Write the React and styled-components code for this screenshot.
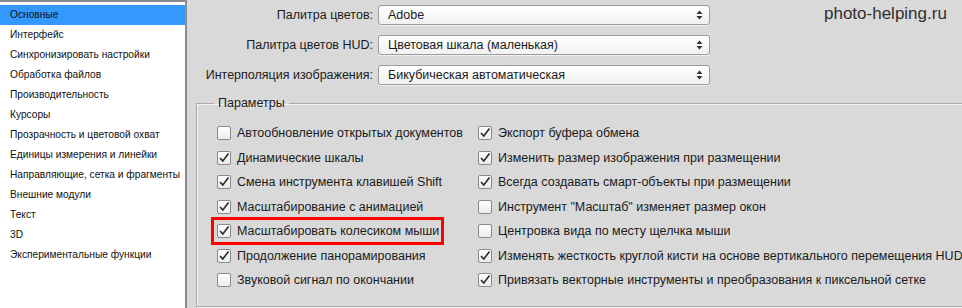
import React from 'react';
import styled, { createGlobalStyle } from 'styled-components';

const Global = createGlobalStyle`
html, body {
  margin: 0;
  padding: 0;
  background: #d9d9d9;
  overflow: hidden;
}
body {
  font-family: "Liberation Sans", Arial, sans-serif;
  color: #1b1b1b;
}
`;

const Page = styled.div`
display: flex;
width: 962px;
height: 308px;
background: #d9d9d9;
`;

const Sidebar = styled.ul`
list-style: none;
margin: 0;
padding: 3px 0 0;
flex: none;
width: 187px;
box-sizing: border-box;
background: #fff;
border-top: 2px solid #8c8c8c;
border-right: 2px solid #8c8c8c;
`;

const NavItem = styled.li`
height: 20px;
line-height: 20px;
padding-left: 10px;
font-size: 10.2px;
color: #111;
background: ${p => (p.$active ? '#3399ff' : 'transparent')};
white-space: nowrap;
`;

const Main = styled.div`
flex: 1;
display: flex;
flex-direction: column;
padding-left: 9px;
min-width: 0;
`;

const Header = styled.div`
display: flex;
align-items: flex-start;
`;

const FormGrid = styled.div`
display: grid;
grid-template-columns: 177px 332px;
grid-auto-rows: 20px;
column-gap: 5px;
row-gap: 10px;
padding-top: 5px;
`;

const Label = styled.label`
text-align: right;
font-size: 12.5px;
line-height: 20px;
white-space: nowrap;
`;

const Select = styled.div`
display: flex;
align-items: center;
justify-content: space-between;
box-sizing: border-box;
height: 20px;
padding: 0 6px 0 9px;
font-size: 12.5px;
border: 1px solid #9c9c9c;
border-radius: 3px;
background: linear-gradient(#ffffff, #f1f1f1);
box-shadow: 0 1px 0 rgba(255, 255, 255, 0.6);
white-space: nowrap;
`;

const Watermark = styled.div`
margin-left: 114px;
margin-top: 4px;
font-size: 17px;
line-height: 20px;
color: #2f2f2f;
white-space: nowrap;
`;

const Group = styled.fieldset`
margin: 10px -40px 0 0;
padding: 10px 0 13px 20px;
border: 1px solid #a9a9a9;
box-shadow: inset 1px 1px 0 #f3f3f3, 1px 1px 0 #f3f3f3;
`;

const Legend = styled.legend`
margin-left: -3px;
padding: 0 4px;
font-size: 12.5px;
line-height: 16px;
`;

const Columns = styled.div`
display: grid;
grid-template-columns: 261px 1fr;
`;

const Column = styled.div`
display: flex;
flex-direction: column;
align-items: flex-start;
`;

const Row = styled.div`
position: relative;
display: inline-flex;
align-items: center;
height: 24.5px;
font-size: 12.5px;
white-space: nowrap;
`;

const Box = styled.span`
display: inline-flex;
align-items: center;
justify-content: center;
box-sizing: border-box;
width: 14px;
height: 14px;
margin-right: 6px;
border: 1px solid #8a8a8a;
border-radius: 2px;
background: linear-gradient(#fdfdfd, #ececec);
`;

const Highlight = styled.span`
position: absolute;
left: -6px;
right: -5px;
top: -2px;
bottom: -1px;
border: 3px solid #f00;
pointer-events: none;
`;

function Check({ on }) {
  return (
    <Box>
      {on && (
        <svg width="12" height="12" viewBox="0 0 12 12">
          <polyline points="2,6 4.8,9 10.5,1.5" fill="none" stroke="#2a2a2a" strokeWidth="1.6" />
        </svg>
      )}
    </Box>
  );
}

function Arrows() {
  return (
    <svg width="7" height="10" viewBox="0 0 7 10">
      <polygon points="0.5,4 6.5,4 3.5,0.5" fill="#333" />
      <polygon points="0.5,6 6.5,6 3.5,9.5" fill="#333" />
    </svg>
  );
}

const nav = [
  'Основные',
  'Интерфейс',
  'Синхронизировать настройки',
  'Обработка файлов',
  'Производительность',
  'Курсоры',
  'Прозрачность и цветовой охват',
  'Единицы измерения и линейки',
  'Направляющие, сетка и фрагменты',
  'Внешние модули',
  'Текст',
  '3D',
  'Экспериментальные функции',
];

const selects = [
  ['Палитра цветов:', 'Adobe'],
  ['Палитра цветов HUD:', 'Цветовая шкала (маленькая)'],
  ['Интерполяция изображения:', 'Бикубическая автоматическая'],
];

const left = [
  ['Автообновление открытых документов', false],
  ['Динамические шкалы', true],
  ['Смена инструмента клавишей Shift', true],
  ['Масштабирование с анимацией', true],
  ['Масштабировать колесиком мыши', true, true],
  ['Продолжение панорамирования', true],
  ['Звуковой сигнал по окончании', false],
];

const right = [
  ['Экспорт буфера обмена', true],
  ['Изменить размер изображения при размещении', true],
  ['Всегда создавать смарт-объекты при размещении', true],
  ['Инструмент "Масштаб" изменяет размер окон', false],
  ['Центровка вида по месту щелчка мыши', false],
  ['Изменять жесткость круглой кисти на основе вертикального перемещения HUD', true],
  ['Привязать векторные инструменты и преобразования к пиксельной сетке', true],
];

export default function App() {
  return (
    <Page>
      <Global />
      <Sidebar>
        {nav.map((n, i) => (
          <NavItem key={n} $active={i === 0}>{n}</NavItem>
        ))}
      </Sidebar>
      <Main>
        <Header>
          <FormGrid>
            {selects.map(([l, v]) => (
              <React.Fragment key={l}>
                <Label>{l}</Label>
                <Select>
                  <span>{v}</span>
                  <Arrows />
                </Select>
              </React.Fragment>
            ))}
          </FormGrid>
          <Watermark>photo-helping.ru</Watermark>
        </Header>
        <Group>
          <Legend>Параметры</Legend>
          <Columns>
            <Column>
              {left.map(([t, on, mark]) => (
                <Row key={t}>
                  <Check on={on} />
                  {t}
                  {mark && <Highlight />}
                </Row>
              ))}
            </Column>
            <Column>
              {right.map(([t, on]) => (
                <Row key={t}>
                  <Check on={on} />
                  {t}
                </Row>
              ))}
            </Column>
          </Columns>
        </Group>
      </Main>
    </Page>
  );
}
